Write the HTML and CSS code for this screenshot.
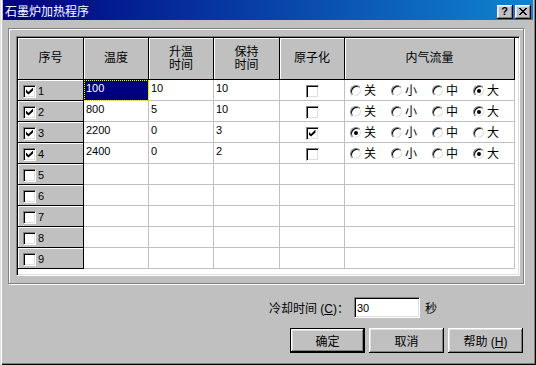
FILE: index.html
```html
<!DOCTYPE html>
<html lang="zh">
<head>
  <meta charset="UTF-8">
  <title>石墨炉加热程序</title>
  <link rel="stylesheet" href="styles.css">
</head>
<body>

<div class="window">
  <div class="titlebar">
    <span class="title">石墨炉加热程序</span>
    <div class="title-buttons">
      <button class="tb-btn">?</button>
      <button class="tb-btn">
        <svg width="8" height="7" viewBox="0 0 8 7" shape-rendering="crispEdges">
          <path d="M0 0h2v1h-2zM6 0h2v1h-2zM1 1h2v1h-2zM5 1h2v1h-2zM2 2h4v1h-4zM3 3h2v1h-2zM2 4h4v1h-4zM1 5h2v1h-2zM5 5h2v1h-2zM0 6h2v1h-2zM6 6h2v1h-2z" fill="#000"/>
        </svg>
      </button>
    </div>
  </div>

  <div class="group">
    <div class="grid">
      <div class="table">
        <div class="hd">序号</div>
        <div class="hd">温度</div>
        <div class="hd">升温<br>时间</div>
        <div class="hd">保持<br>时间</div>
        <div class="hd">原子化</div>
        <div class="hd">内气流量</div>

        <!-- row 1 -->
        <div class="rh"><span class="check on"></span><span class="num">1</span></div>
        <div class="cell sel">100</div>
        <div class="cell">10</div>
        <div class="cell">10</div>
        <div class="cell mid"><span class="check"></span></div>
        <div class="cell flow">
          <span class="opt"><span class="radio"></span>关</span>
          <span class="opt"><span class="radio"></span>小</span>
          <span class="opt"><span class="radio"></span>中</span>
          <span class="opt"><span class="radio on"></span>大</span>
        </div>

        <!-- row 2 -->
        <div class="rh"><span class="check on"></span><span class="num">2</span></div>
        <div class="cell">800</div>
        <div class="cell">5</div>
        <div class="cell">10</div>
        <div class="cell mid"><span class="check"></span></div>
        <div class="cell flow">
          <span class="opt"><span class="radio"></span>关</span>
          <span class="opt"><span class="radio"></span>小</span>
          <span class="opt"><span class="radio"></span>中</span>
          <span class="opt"><span class="radio on"></span>大</span>
        </div>

        <!-- row 3 -->
        <div class="rh"><span class="check on"></span><span class="num">3</span></div>
        <div class="cell">2200</div>
        <div class="cell">0</div>
        <div class="cell">3</div>
        <div class="cell mid"><span class="check on"></span></div>
        <div class="cell flow">
          <span class="opt"><span class="radio on"></span>关</span>
          <span class="opt"><span class="radio"></span>小</span>
          <span class="opt"><span class="radio"></span>中</span>
          <span class="opt"><span class="radio"></span>大</span>
        </div>

        <!-- row 4 -->
        <div class="rh"><span class="check on"></span><span class="num">4</span></div>
        <div class="cell">2400</div>
        <div class="cell">0</div>
        <div class="cell">2</div>
        <div class="cell mid"><span class="check"></span></div>
        <div class="cell flow">
          <span class="opt"><span class="radio"></span>关</span>
          <span class="opt"><span class="radio"></span>小</span>
          <span class="opt"><span class="radio"></span>中</span>
          <span class="opt"><span class="radio on"></span>大</span>
        </div>

        <!-- rows 5-9 -->
        <div class="rh"><span class="check"></span><span class="num">5</span></div>
        <div class="cell"></div><div class="cell"></div><div class="cell"></div><div class="cell"></div><div class="cell"></div>
        <div class="rh"><span class="check"></span><span class="num">6</span></div>
        <div class="cell"></div><div class="cell"></div><div class="cell"></div><div class="cell"></div><div class="cell"></div>
        <div class="rh"><span class="check"></span><span class="num">7</span></div>
        <div class="cell"></div><div class="cell"></div><div class="cell"></div><div class="cell"></div><div class="cell"></div>
        <div class="rh"><span class="check"></span><span class="num">8</span></div>
        <div class="cell"></div><div class="cell"></div><div class="cell"></div><div class="cell"></div><div class="cell"></div>
        <div class="rh"><span class="check"></span><span class="num">9</span></div>
        <div class="cell"></div><div class="cell"></div><div class="cell"></div><div class="cell"></div><div class="cell"></div>
      </div>
    </div>
  </div>

  <div class="cool-row">
    <label for="coolTime">冷却时间 (<u>C</u>)：</label>
    <input type="text" id="coolTime" class="field" value="30">
    <span>秒</span>
  </div>

  <div class="actions">
    <button class="btn default">确定</button>
    <button class="btn">取消</button>
    <button class="btn">帮助 (<u>H</u>)</button>
  </div>
</div>

</body>
</html>
```

FILE: styles.css
```css
* {
  box-sizing: border-box;
  margin: 0;
  padding: 0;
}

body {
  width: 536px;
  height: 365px;
  overflow: hidden;
  background: #c0c0c0;
  color: #000;
  font-family: "Liberation Sans", "Noto Sans CJK SC", sans-serif;
  font-size: 12px;
}

.window {
  width: 536px;
  height: 365px;
  padding: 0 2px 2px;
  background: #c0c0c0;
  box-shadow: inset 1px 0 #dfdfdf, inset 2px 0 #fff, inset -1px -1px #000, inset -2px -2px #808080;
}

/* title bar */
.titlebar {
  height: 20px;
  margin: 0 1px;
  padding: 3px 2px 0 2px;
  display: flex;
  align-items: center;
  background: linear-gradient(to right, #000080, #1084d0);
  color: #fff;
}

.title {
  flex: 1;
  font-size: 12px;
  line-height: 14px;
}

.title-buttons {
  display: flex;
  gap: 2px;
}

.tb-btn {
  width: 16px;
  height: 14px;
  border: none;
  background: #c0c0c0;
  box-shadow: inset -1px -1px #000, inset 1px 1px #fff, inset -2px -2px #808080, inset 2px 2px #dfdfdf;
  display: flex;
  justify-content: center;
  align-items: center;
  font-family: "Liberation Sans", sans-serif;
  font-size: 11px;
  font-weight: bold;
  line-height: 11px;
  color: #000;
  padding: 0 1px 1px 0;
}

/* group frame */
.group {
  width: 516px;
  height: 256px;
  margin: 8px 0 0 6px;
  padding: 7px;
  border: 1px solid #808080;
  box-shadow: inset 1px 1px #fff, 1px 1px #fff;
}

.grid {
  width: 504px;
  height: 240px;
  padding: 1px;
  background: #fff;
  border: 1px solid;
  border-color: #808080 #fff #fff #808080;
  box-shadow: inset 1px 1px #000, inset -1px -1px #dfdfdf;
}

.table {
  display: grid;
  grid-template-columns: 66px 65px 65px 66px 65px 170px;
  grid-template-rows: 42px repeat(9, 21px);
}

.hd,
.rh {
  background: #c0c0c0;
  border-right: 1px solid #000;
  border-bottom: 1px solid #000;
  box-shadow: inset 1px 1px #fff;
}

.hd {
  display: flex;
  justify-content: center;
  align-items: center;
  text-align: center;
  line-height: 13px;
}

.rh {
  display: flex;
  align-items: center;
  gap: 2px;
  padding: 2px 0 0 5px;
}

.num {
  font-size: 11px;
}

.cell {
  background: #fff;
  border-right: 1px solid #c0c0c0;
  border-bottom: 1px solid #c0c0c0;
  padding: 2px 0 0 2px;
  font-size: 11px;
  line-height: 13px;
}

.cell.sel {
  background: #000080;
  color: #fff;
  outline: 1px dotted #ff0;
  outline-offset: -1px;
}

.cell.mid {
  display: flex;
  justify-content: center;
  align-items: center;
  padding: 2px 0 0 0;
}

.cell.flow {
  display: flex;
  align-items: center;
  padding: 2px 0 0 5px;
  font-size: 12px;
}

.opt {
  width: 42px;
  display: flex;
  align-items: center;
  gap: 2px;
}

/* check box and radio */
.check {
  width: 13px;
  height: 13px;
  flex: none;
  display: flex;
  justify-content: center;
  align-items: center;
  background: #fff;
  border: 1px solid;
  border-color: #808080 #fff #fff #808080;
  box-shadow: inset 1px 1px #000, inset -1px -1px #dfdfdf;
}

.check.on::after {
  content: "";
  width: 7px;
  height: 7px;
  background: #000;
  clip-path: polygon(0 28%, 36% 64%, 100% 0, 100% 43%, 36% 100%, 0 72%);
}

.radio {
  width: 12px;
  height: 12px;
  flex: none;
  display: flex;
  justify-content: center;
  align-items: center;
  border-radius: 50%;
  background: #fff;
  border: 1px solid;
  border-color: #808080 #fff #fff #808080;
  box-shadow: inset 1px 1px #000, inset -1px -1px #dfdfdf;
}

.radio.on::after {
  content: "";
  width: 4px;
  height: 4px;
  border-radius: 50%;
  background: #000;
}

/* cooling time */
.cool-row {
  height: 21px;
  margin-top: 13px;
  padding-right: 97px;
  display: flex;
  justify-content: flex-end;
  align-items: center;
  gap: 5px;
}

.field {
  width: 66px;
  height: 21px;
  padding: 0 2px;
  background: #fff;
  border: 1px solid;
  border-color: #808080 #fff #fff #808080;
  box-shadow: inset 1px 1px #000, inset -1px -1px #dfdfdf;
  outline: none;
  font-family: "Liberation Sans", sans-serif;
  font-size: 11px;
  color: #000;
}

/* buttons */
.actions {
  margin-top: 10px;
  padding-right: 11px;
  display: flex;
  justify-content: flex-end;
  gap: 4px;
}

.btn {
  width: 75px;
  height: 25px;
  border: none;
  background: #c0c0c0;
  box-shadow: inset -1px -1px #000, inset 1px 1px #fff, inset -2px -2px #808080, inset 2px 2px #dfdfdf;
  font-family: "Liberation Sans", "Noto Sans CJK SC", sans-serif;
  font-size: 12px;
  color: #000;
}

.btn.default {
  border: 1px solid #000;
}
```
